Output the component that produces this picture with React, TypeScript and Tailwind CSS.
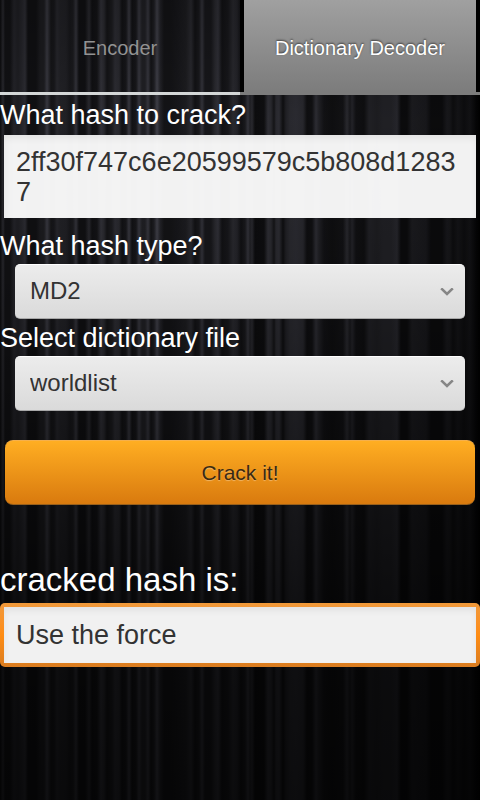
import { type FormEvent, useState } from 'react'
import clsx from 'clsx'

type Tab = 'encoder' | 'decoder'

const tabs: { id: Tab; label: string }[] = [
  { id: 'encoder', label: 'Encoder' },
  { id: 'decoder', label: 'Dictionary Decoder' },
]

const hashTypes = ['MD2', 'MD5', 'SHA-1', 'SHA-256', 'SHA-384', 'SHA-512']
const dictionaries = ['worldlist']

// position across the curtain and brightness of the cloth there
const folds: [number, number][] = [
  [0, 12], [3, 46], [5, 20], [10, 20], [14, 40], [18, 34], [22, 42], [25, 50], [28, 18], [36, 18],
  [40, 30], [44, 32], [47, 64], [51, 24], [54, 26], [57, 44], [60, 38], [66, 36], [70, 26], [73, 30], [76, 58],
  [79, 18], [85, 18], [89, 46], [92, 18], [97, 22], [101, 56], [104, 46], [107, 22], [112, 32], [115, 50],
  [119, 46], [122, 20], [126, 26], [129, 64], [132, 20], [136, 26], [139, 62], [142, 36], [145, 36], [148, 62],
  [151, 22], [154, 34], [157, 72], [160, 40], [164, 22], [171, 22], [178, 26], [186, 32], [191, 46], [195, 20],
  [199, 28], [202, 58], [205, 26], [211, 26], [215, 46], [218, 54], [222, 20], [228, 26], [233, 46], [237, 40],
  [241, 18], [245, 28], [248, 58], [250, 36], [252, 46], [255, 14], [264, 16], [268, 52], [271, 46], [274, 22],
  [276, 46], [279, 50], [283, 16], [286, 36], [290, 46], [296, 48], [303, 44], [307, 16], [312, 18], [316, 50],
  [319, 36], [324, 20], [332, 16], [343, 20], [347, 46], [350, 26], [352, 40], [356, 18], [364, 16], [369, 36],
  [377, 32], [383, 36], [391, 36], [397, 42], [401, 12], [407, 12], [412, 30], [418, 28], [426, 26], [431, 12],
  [442, 12], [447, 26], [450, 24], [453, 14], [458, 22], [464, 14], [470, 20], [476, 6], [480, 0],
]

const fieldClass =
  'block w-full resize-none px-3 text-[27px] leading-[30px] text-[#333] outline-none shadow-[inset_0_4px_6px_rgba(0,0,0,0.06)]'
const labelClass = 'block text-[27px] leading-[30px] text-white'

function Curtain() {
  return (
    <svg
      className="absolute inset-0 -z-10 h-full w-full"
      viewBox="0 0 480 800"
      preserveAspectRatio="none"
      aria-hidden="true"
    >
      <defs>
        <linearGradient id="folds">
          {folds.map(([x, level]) => (
            <stop
              key={x}
              offset={x / 480}
              stopColor={`rgb(${level}, ${level}, ${Math.round(level * 1.14)})`}
            />
          ))}
        </linearGradient>
        <linearGradient id="shade" x1="0" y1="0" x2="0" y2="1">
          <stop offset="0" stopOpacity="0.3" />
          <stop offset="0.15" stopOpacity="0.12" />
          <stop offset="0.35" stopOpacity="0.22" />
          <stop offset="0.55" stopOpacity="0.44" />
          <stop offset="0.75" stopOpacity="0.66" />
          <stop offset="1" stopOpacity="0.74" />
        </linearGradient>
      </defs>
      <rect width="480" height="800" fill="url(#folds)" />
      <rect width="480" height="800" fill="url(#shade)" />
    </svg>
  )
}

interface SpinnerProps {
  id: string
  label: string
  value: string
  options: string[]
  onChange: (value: string) => void
}

function Spinner({ id, label, value, options, onChange }: SpinnerProps) {
  return (
    <div>
      <label htmlFor={id} className={labelClass}>
        {label}
      </label>
      <div className="relative mx-[15px] mt-[3px]">
        <select
          id={id}
          value={value}
          onChange={(event) => onChange(event.target.value)}
          className="block h-[55px] w-full appearance-none rounded-[5px] border-t border-b border-t-white border-b-[#a8a8a8] bg-linear-to-b from-[#ececec] to-[#dadada] pr-10 pb-0.5 pl-[15px] text-2xl text-[#333] outline-none"
        >
          {options.map((option) => (
            <option key={option} value={option}>
              {option}
            </option>
          ))}
        </select>
        <svg
          className="pointer-events-none absolute top-6 right-[11px] h-2 w-[14px]"
          viewBox="0 0 14 8"
          fill="none"
          stroke="#868686"
          strokeWidth="2.6"
          aria-hidden="true"
        >
          <path d="M1.2 0.4 7 6 12.8 0.4" />
        </svg>
      </div>
    </div>
  )
}

export default function App() {
  const [tab, setTab] = useState<Tab>('decoder')
  const [hash, setHash] = useState('2ff30f747c6e20599579c5b808d12837')
  const [hashType, setHashType] = useState('MD2')
  const [dictionary, setDictionary] = useState('worldlist')
  const [result, setResult] = useState('Use the force')

  const onSubmit = (event: FormEvent<HTMLFormElement>) => {
    event.preventDefault()
  }

  return (
    <div className="relative isolate min-h-screen bg-black font-['Liberation_Sans',Arial,sans-serif]">
      <Curtain />

      <div role="tablist" className="grid h-[95px] grid-cols-2">
        {tabs.map(({ id, label }) => (
          <div
            key={id}
            className={clsx(
              'border-b-[3px]',
              tab === id ? 'border-[#7c7c7c] bg-black px-1' : 'border-[#d4d7d7]',
            )}
          >
            <button
              type="button"
              role="tab"
              aria-selected={tab === id}
              onClick={() => setTab(id)}
              className={clsx(
                'h-full w-full pt-1 text-xl',
                tab === id
                  ? 'bg-linear-to-b from-[#a0a0a0] to-[#7c7c7c] text-white [text-shadow:0_-1px_2px_rgba(0,0,0,0.6)]'
                  : 'text-[#929292]',
              )}
            >
              {label}
            </button>
          </div>
        ))}
      </div>

      <form onSubmit={onSubmit} className="pt-[5px]">
        <label htmlFor="hash" className={labelClass}>
          What hash to crack?
        </label>
        <div className="mx-1 mt-[5px] mb-[13px]">
          <textarea
            id="hash"
            rows={2}
            spellCheck={false}
            value={hash}
            onChange={(event) => setHash(event.target.value)}
            className={clsx(fieldClass, 'h-[83px] overflow-hidden bg-[#fafafa]/97 pt-3 break-all')}
          />
        </div>

        <div className="space-y-1">
          <Spinner
            id="hash-type"
            label="What hash type?"
            value={hashType}
            options={hashTypes}
            onChange={setHashType}
          />
          <Spinner
            id="dictionary"
            label="Select dictionary file"
            value={dictionary}
            options={dictionaries}
            onChange={setDictionary}
          />
        </div>

        <div className="mt-[29px] px-[5px]">
          <button
            type="submit"
            className="block h-[65px] w-full rounded-lg border-t border-b border-t-[#f5b04d] border-b-[#98601c] bg-linear-to-b from-[#ffae22] to-[#d97a0e] text-[21px] text-[#3a2a12] [text-shadow:0_1px_1px_rgba(255,255,255,0.35)]"
          >
            Crack it!
          </button>
        </div>

        <label htmlFor="result" className="mt-[57px] block text-[33px] leading-9 text-white">
          cracked hash is:
        </label>
        <div className="mt-[5px] rounded-[5px] bg-linear-to-b from-[#f0993a] via-[#ff8c12] to-[#d97c20] p-1">
          <input
            id="result"
            type="text"
            value={result}
            onChange={(event) => setResult(event.target.value)}
            className={clsx(fieldClass, 'h-14 bg-[#f1f1f1]')}
          />
        </div>
      </form>
    </div>
  )
}
